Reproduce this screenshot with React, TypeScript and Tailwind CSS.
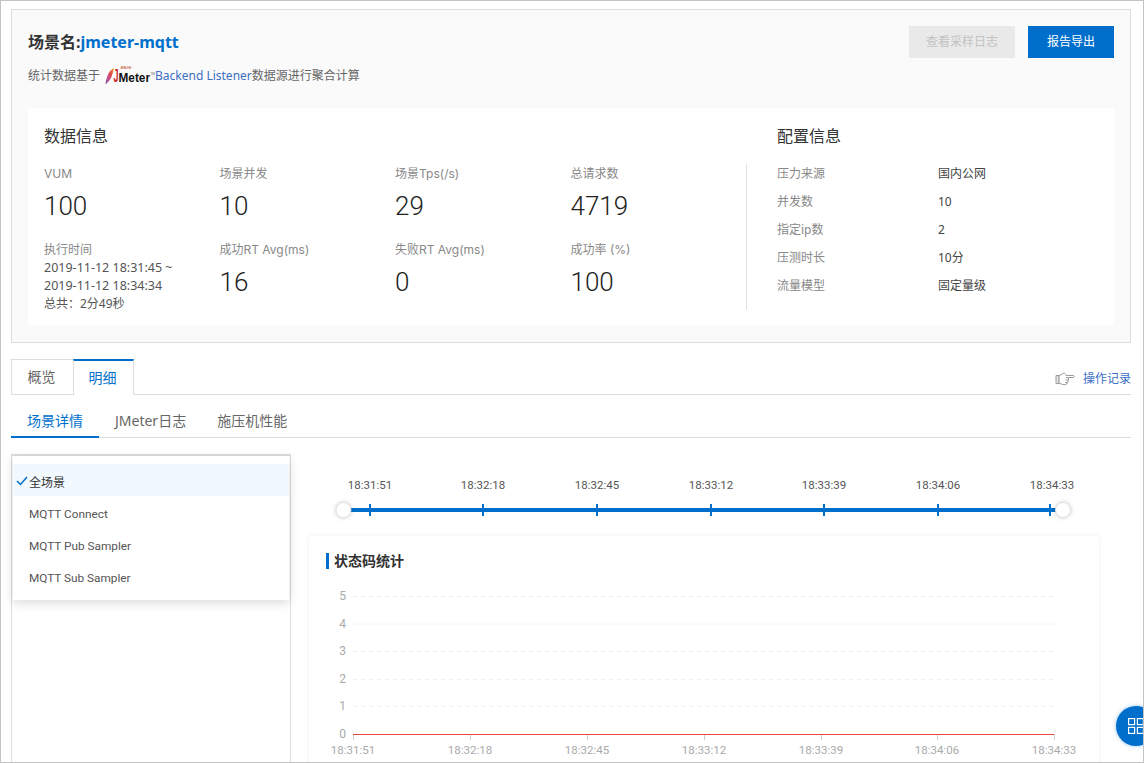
import React from "react";

const stats = [
  { label: "VUM", value: "100" },
  { label: "场景并发", value: "10" },
  { label: "场景Tps(/s)", value: "29" },
  { label: "总请求数", value: "4719" },
];
const stats2 = [
  { label: "成功RT Avg(ms)", value: "16" },
  { label: "失败RT Avg(ms)", value: "0" },
  { label: "成功率 (%)", value: "100" },
];
const config = [
  ["压力来源", "国内公网"],
  ["并发数", "10"],
  ["指定ip数", "2"],
  ["压测时长", "10分"],
  ["流量模型", "固定量级"],
];
const times = ["18:31:51", "18:32:18", "18:32:45", "18:33:12", "18:33:39", "18:34:06", "18:34:33"];
const sliderX = [61, 174, 288, 402, 515, 629, 743];
const tickX = [60, 173, 287, 401, 514, 628, 740];
const chartX = [44, 161, 278, 395, 512, 628, 745];
const gridY = [27.5, 55, 82.5, 110.5, 137.5];
const labelY = [31, 58.5, 86, 113.5, 141, 168.5];
const svgFont = { fontFamily: "Roboto, sans-serif" };

function JMeterLogo() {
  return (
    <svg width="51" height="20" viewBox="0 0 51 20" className="block shrink-0">
      <defs>
        <linearGradient id="feather" x1="0.9" y1="0" x2="0.1" y2="1">
          <stop offset="0" stopColor="#f39a2b" />
          <stop offset="0.4" stopColor="#e0434f" />
          <stop offset="0.75" stopColor="#b8559f" />
          <stop offset="1" stopColor="#6e4a9c" />
        </linearGradient>
      </defs>
      <path d="M10 2 C5.5 4 2.5 10 1.5 18 C2 18 2.5 18 2.8 17 C6.5 15 8.5 9 10 2Z" fill="url(#feather)" />
      <text x="9.5" y="16" fontSize="18" fontWeight="700" fill="#d2232a" textLength="5" lengthAdjust="spacingAndGlyphs" fontFamily="'Liberation Sans', sans-serif">J</text>
      <text x="14.5" y="16" fontSize="13" fontWeight="700" fill="#111" textLength="31.5" lengthAdjust="spacingAndGlyphs" fontFamily="'Liberation Sans', sans-serif">Meter</text>
      <text x="16.5" y="3.3" fontSize="3.5" fill="#c05a3a" textLength="11" fontFamily="'Liberation Sans', sans-serif">APACHE</text>
      <text x="46.5" y="8.5" fontSize="3" fill="#555" fontFamily="'Liberation Sans', sans-serif">TM</text>
    </svg>
  );
}

function HandIcon() {
  return (
    <svg width="20" height="16" viewBox="0 0 20 16" fill="#fff" stroke="#9a9a9a" strokeWidth="1" className="shrink-0">
      <path d="M1 4.5 H4 V12.5 H1Z" fill="#e8e8e8" />
      <path d="M4 5 L8 2.5 C9 2 10 2.2 10.5 3.5 L11 4.5 H18.5 C19.4 4.5 19.4 6.5 18.5 6.5 H13.5 V8 C13.5 9 13.2 9.5 13 10 C13.2 11 12.8 11.5 12.3 11.8 C12 13 11.5 13.5 10.5 13.5 H7.5 L4 12Z" />
      <path d="M11 6.5 H13.5 M10.5 9 H13 M10 11.5 H12.3" fill="none" />
    </svg>
  );
}

function Stat({ label, value }: { label: string; value: string }) {
  return (
    <div className="w-[175.5px] shrink-0">
      <div className="font-['Inter','Noto_Sans_CJK_SC',sans-serif] text-xs leading-[18px] text-[#888888]">{label}</div>
      <div className="mt-[6px] font-['Roboto',sans-serif] text-[26px] font-light leading-[34px] text-[#222222]">{value}</div>
    </div>
  );
}

export default function App() {
  return (
    <div className="relative h-[763px] w-[1144px] overflow-hidden border border-[#c4c4c4] bg-white pl-[10px] pt-[8px] font-['Noto_Sans','Noto_Sans_CJK_SC',sans-serif] text-[#333333]">
      <div className="w-[1120px]">
        {/* Header panel */}
        <div className="h-[334px] border border-[#dddddd] bg-[#fafafa] px-4">
          <div className="flex h-[98px] justify-between pt-[16px]">
            <div className="-mt-px">
              <div className="text-base font-bold leading-[34px]">
                场景名:<span className="text-[#006fcc]">jmeter-mqtt</span>
              </div>
              <div className="mt-[7px] flex h-5 items-center text-xs text-[#666666]">
                <span>统计数据基于</span>
                <span className="ml-[4px]"><JMeterLogo /></span>
                <span className="text-[#3b6fc4]">Backend Listener</span>
                <span>数据源进行聚合计算</span>
              </div>
            </div>
            <div className="flex gap-[13px]">
              <div className="flex h-8 w-[106px] items-center justify-center bg-[#e9e9e9] text-xs text-[#c2c2c2]">查看采样日志</div>
              <div className="flex h-8 w-[86px] items-center justify-center bg-[#006fcc] text-xs text-white">报告导出</div>
            </div>
          </div>
          <div className="flex h-[218px] bg-white pl-4">
            <div className="w-[702px] shrink-0 pt-[17px]">
              <div className="text-base leading-[22px]">数据信息</div>
              <div className="mt-[18px] flex h-[66px]">
                {stats.map((s) => (
                  <Stat key={s.label} {...s} />
                ))}
              </div>
              <div className="mt-[10px] flex">
                <div className="w-[175.5px] shrink-0 text-xs leading-[18px]">
                  <div className="text-[#888888]">执行时间</div>
                  <div className="text-[12.5px] text-[#555555]">2019-11-12 18:31:45 ~</div>
                  <div className="text-[12.5px] text-[#555555]">2019-11-12 18:34:34</div>
                  <div className="text-[#555555]">{"总共\uFF1A2分49秒"}</div>
                </div>
                {stats2.map((s) => (
                  <Stat key={s.label} {...s} />
                ))}
              </div>
            </div>
            <div className="mt-[56px] h-[146px] w-px bg-[#e2e2e2]" />
            <div className="ml-[30px] flex-1 pt-[17px]">
              <div className="text-base leading-[22px]">配置信息</div>
              <div className="mt-[13px]">
                {config.map(([k, v]) => (
                  <div key={k} className="flex h-[28px] items-center text-xs">
                    <span className="w-[161px] text-[#888888]">{k}</span>
                    <span className="text-[#444444]">{v}</span>
                  </div>
                ))}
              </div>
            </div>
          </div>
        </div>

        {/* Tabs */}
        <div className="mt-4 flex h-[36px] items-stretch border-b border-[#dddddd] text-sm">
          <div className="flex w-[62px] items-center justify-center border-t border-l border-[#dddddd] pr-[2px] text-[#666666]">概览</div>
          <div className="-mb-px flex w-[61px] items-center justify-center border-x border-t-2 border-[#dddddd] border-t-[#006fcc] bg-white pr-[2px] text-[#006fcc]">明细</div>
          <div className="flex flex-1 items-end justify-end gap-[8px] pb-[7px] text-xs text-[#3b6fc4]">
            <HandIcon />
            <span>操作记录</span>
          </div>
        </div>

        {/* Sub tabs */}
        <div className="flex h-[43px] items-stretch border-b border-[#dddddd] text-sm">
          <div className="-mb-px flex items-center border-b-2 border-[#006fcc] px-4 pt-[10px] text-[#006fcc]">场景详情</div>
          <div className="flex items-center px-4 pt-[10px] text-[#666666]">JMeter日志</div>
          <div className="-ml-px flex items-center px-4 pt-[10px] text-[#666666]">施压机性能</div>
        </div>

        {/* Body */}
        <div className="mt-4 flex">
          <div className="h-[320px] w-[280px] shrink-0 border border-t-2 border-[#dddddd] px-px">
            <div className="h-[144px] bg-white pt-[8px] text-xs text-[#555555] shadow-[0_3px_10px_rgba(0,0,0,0.15)]">
              <div className="flex h-8 items-center bg-[#f1f8fe] pl-[16px] pt-[6px] text-[#333333]">
                <svg width="12" height="10" viewBox="0 0 12 10" className="-ml-[13px] mr-[1px] -mt-[5px]" fill="none" stroke="#006fcc" strokeWidth="1.5">
                  <path d="M1 5 L4.5 8.5 L11 1" />
                </svg>
                全场景
              </div>
              {["MQTT Connect", "MQTT Pub Sampler", "MQTT Sub Sampler"].map((t) => (
                <div key={t} className="flex h-8 items-center pl-[16px] pt-[6px] font-['Roboto',sans-serif] text-[11.8px]">{t}</div>
              ))}
            </div>
          </div>

          <div className="ml-[18px] flex-1">
            {/* Slider */}
            <svg width="790" height="82" viewBox="0 0 790 82" className="block" style={svgFont}>
              <rect x="39" y="54" width="710" height="4" fill="#006fcc" />
              {tickX.map((x, i) => (
                <g key={x}>
                  <rect x={x} y="50" width="2" height="12" fill="#006fcc" />
                  <text x={sliderX[i]} y="35" textAnchor="middle" fontSize="11.5" fill="#555555">{times[i]}</text>
                </g>
              ))}
              <circle cx="34.5" cy="56" r="7.5" fill="#fff" stroke="#e2e2e2" className="drop-shadow-[0_0_2px_rgba(0,0,0,0.2)]" />
              <circle cx="754" cy="56" r="7.5" fill="#fff" stroke="#e2e2e2" className="drop-shadow-[0_0_2px_rgba(0,0,0,0.2)]" />
            </svg>
            {/* Chart card */}
            <div className="h-[240px] w-[790px] bg-white shadow-[0_0_5px_rgba(0,0,0,0.07)]">
              <div className="flex items-center pl-[17px] pt-[17px]">
                <span className="mr-[5px] h-4 w-[3px] bg-[#006fcc]" />
                <span className="text-sm font-bold leading-4 text-[#333333]">状态码统计</span>
              </div>
              <svg width="790" height="190" viewBox="0 0 790 190" className="block" style={svgFont}>
                {gridY.map((y) => (
                  <line key={y} x1="44" x2="745" y1={y} y2={y} stroke="#eeeeee" strokeDasharray="4 4" />
                ))}
                {labelY.map((y, i) => (
                  <text key={y} x="37" y={y} textAnchor="end" fontSize="12" fill="#aaaaaa">{5 - i}</text>
                ))}
                {chartX.map((x, i) => (
                  <g key={x}>
                    <line x1={x + 0.5} x2={x + 0.5} y1="165" y2="171" stroke="#cccccc" />
                    <text x={x} y="185" textAnchor="middle" fontSize="11.5" fill="#aaaaaa">{times[i]}</text>
                  </g>
                ))}
                <rect x="44" y="165" width="701" height="1" fill="#e5483a" />
              </svg>
            </div>
          </div>
        </div>
      </div>

      {/* Floating button */}
      <div className="absolute left-[1115px] top-[705px] flex h-10 w-10 items-center justify-center rounded-full bg-[#006fcc] shadow-[0_0_4px_rgba(0,111,204,0.4)]">
        <svg width="16" height="16" viewBox="0 0 16 16" fill="none" stroke="#fff" strokeWidth="1.2">
          <rect x="0.6" y="0.6" width="6" height="6" />
          <rect x="9.4" y="0.6" width="6" height="6" />
          <rect x="0.6" y="9.4" width="6" height="6" />
          <rect x="9.4" y="9.4" width="6" height="6" />
        </svg>
      </div>
    </div>
  );
}
